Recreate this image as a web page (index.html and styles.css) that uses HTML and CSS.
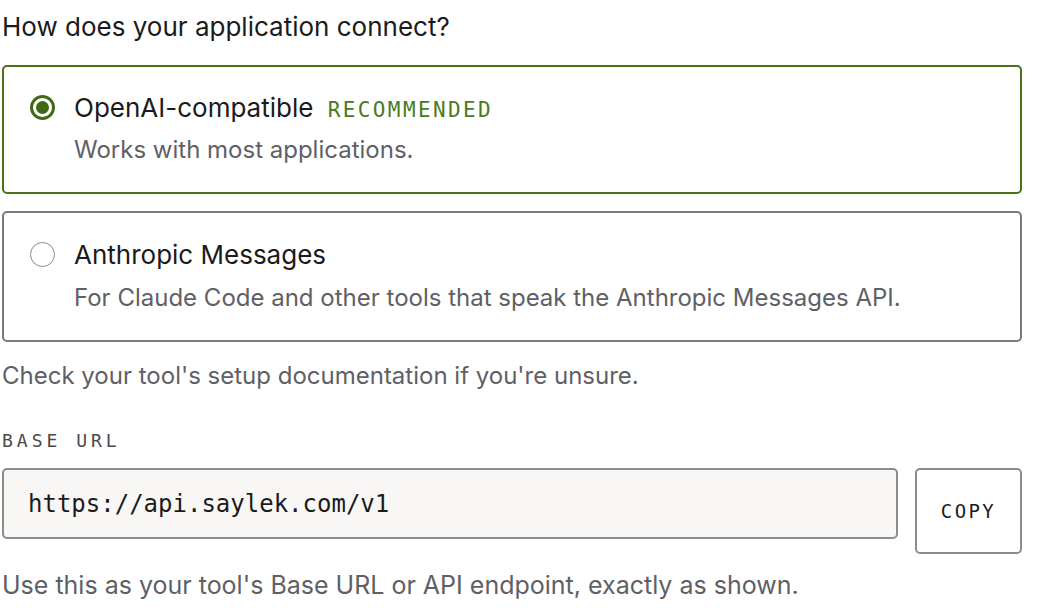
FILE: index.html
```html
<!DOCTYPE html>
<html lang="en">
<head>
    <meta charset="UTF-8">
    <meta name="viewport" content="width=device-width, initial-scale=1.0">
    <title>Connect your application</title>
    <link rel="stylesheet" href="styles.css">
</head>
<body>
    <div class="container">
        <h2 class="question">How does your application connect?</h2>

        <!-- Protocol options -->
        <div class="options">
            <label class="option selected">
                <span class="radio"></span>
                <span class="option-body">
                    <span class="option-title">OpenAI-compatible <span class="badge">RECOMMENDED</span></span>
                    <span class="option-desc">Works with most applications.</span>
                </span>
            </label>
            <label class="option">
                <span class="radio"></span>
                <span class="option-body">
                    <span class="option-title">Anthropic Messages</span>
                    <span class="option-desc">For Claude Code and other tools that speak the Anthropic Messages API.</span>
                </span>
            </label>
        </div>

        <p class="hint">Check your tool's setup documentation if you're unsure.</p>

        <!-- Base URL -->
        <div class="field-label">BASE URL</div>
        <div class="url-row">
            <div class="url-box">https://api.saylek.com/v1</div>
            <button class="copy-btn">COPY</button>
        </div>
        <p class="hint note">Use this as your tool's Base URL or API endpoint, exactly as shown.</p>
    </div>
</body>
</html>
```

FILE: styles.css
```css
body {
    font-family: Inter, "Noto Sans", sans-serif;
    margin: 0;
    padding: 0;
    background: #ffffff;
    color: #1b1b1b;
}
.container {
    width: 1020px;
    padding: 0 2px;
}
.question {
    font-size: 26px;
    font-weight: 400;
    line-height: 30px;
    margin: 12px 0 23px;
}
.options {
    display: flex;
    flex-direction: column;
    gap: 17px;
}
.option {
    display: flex;
    align-items: flex-start;
    gap: 19px;
    border: 2px solid #7a7a76;
    border-radius: 5px;
    padding: 27px 24px 27px 26px;
    cursor: pointer;
}
.option.selected {
    border-color: #4a7218;
    padding-top: 26px;
}
.radio {
    width: 25px;
    height: 25px;
    margin-top: 2px;
    border: 1.5px solid #8a8a88;
    border-radius: 50%;
    box-sizing: border-box;
    flex-shrink: 0;
    display: flex;
    align-items: center;
    justify-content: center;
}
.selected .radio {
    border: 3px solid #3f6a13;
}
.selected .radio::after {
    content: "";
    width: 13px;
    height: 13px;
    border-radius: 50%;
    background: #3f6a13;
}
.option-body {
    display: flex;
    flex-direction: column;
    gap: 13px;
}
.selected .option-body {
    gap: 12px;
}
.option-title {
    font-size: 26px;
    line-height: 30px;
    color: #1b1b1b;
}
.badge {
    font-family: "DejaVu Sans Mono", monospace;
    font-size: 21px;
    line-height: 1;
    letter-spacing: 2.4px;
    color: #4a7a1e;
    margin-left: 7px;
}
.option-desc {
    font-size: 24px;
    line-height: 30px;
    color: #5f6066;
}
.hint {
    font-size: 24px;
    line-height: 30px;
    color: #5f6066;
    margin: 19px 0 0;
}
.field-label {
    font-family: "DejaVu Sans Mono", monospace;
    font-size: 18px;
    letter-spacing: 4px;
    line-height: 20px;
    color: #4a4a4a;
    margin-top: 40px;
}
.url-row {
    display: flex;
    align-items: flex-start;
    gap: 17px;
    margin-top: 17px;
}
.url-box {
    flex: 1;
    height: 71px;
    box-sizing: border-box;
    display: flex;
    align-items: center;
    padding: 0 24px;
    background: #f8f7f5;
    border: 2px solid #8c8c88;
    border-radius: 5px;
    font-family: "DejaVu Sans Mono", monospace;
    font-size: 24px;
    color: #1b1b1b;
}
.copy-btn {
    width: 107px;
    height: 86px;
    padding: 0;
    background: #ffffff;
    border: 2px solid #8c8c88;
    border-radius: 5px;
    font-family: "DejaVu Sans Mono", monospace;
    font-size: 19px;
    letter-spacing: 2.4px;
    color: #1b1b1b;
    cursor: pointer;
}
.hint.note {
    font-size: 25px;
    margin-top: 16px;
}
```
